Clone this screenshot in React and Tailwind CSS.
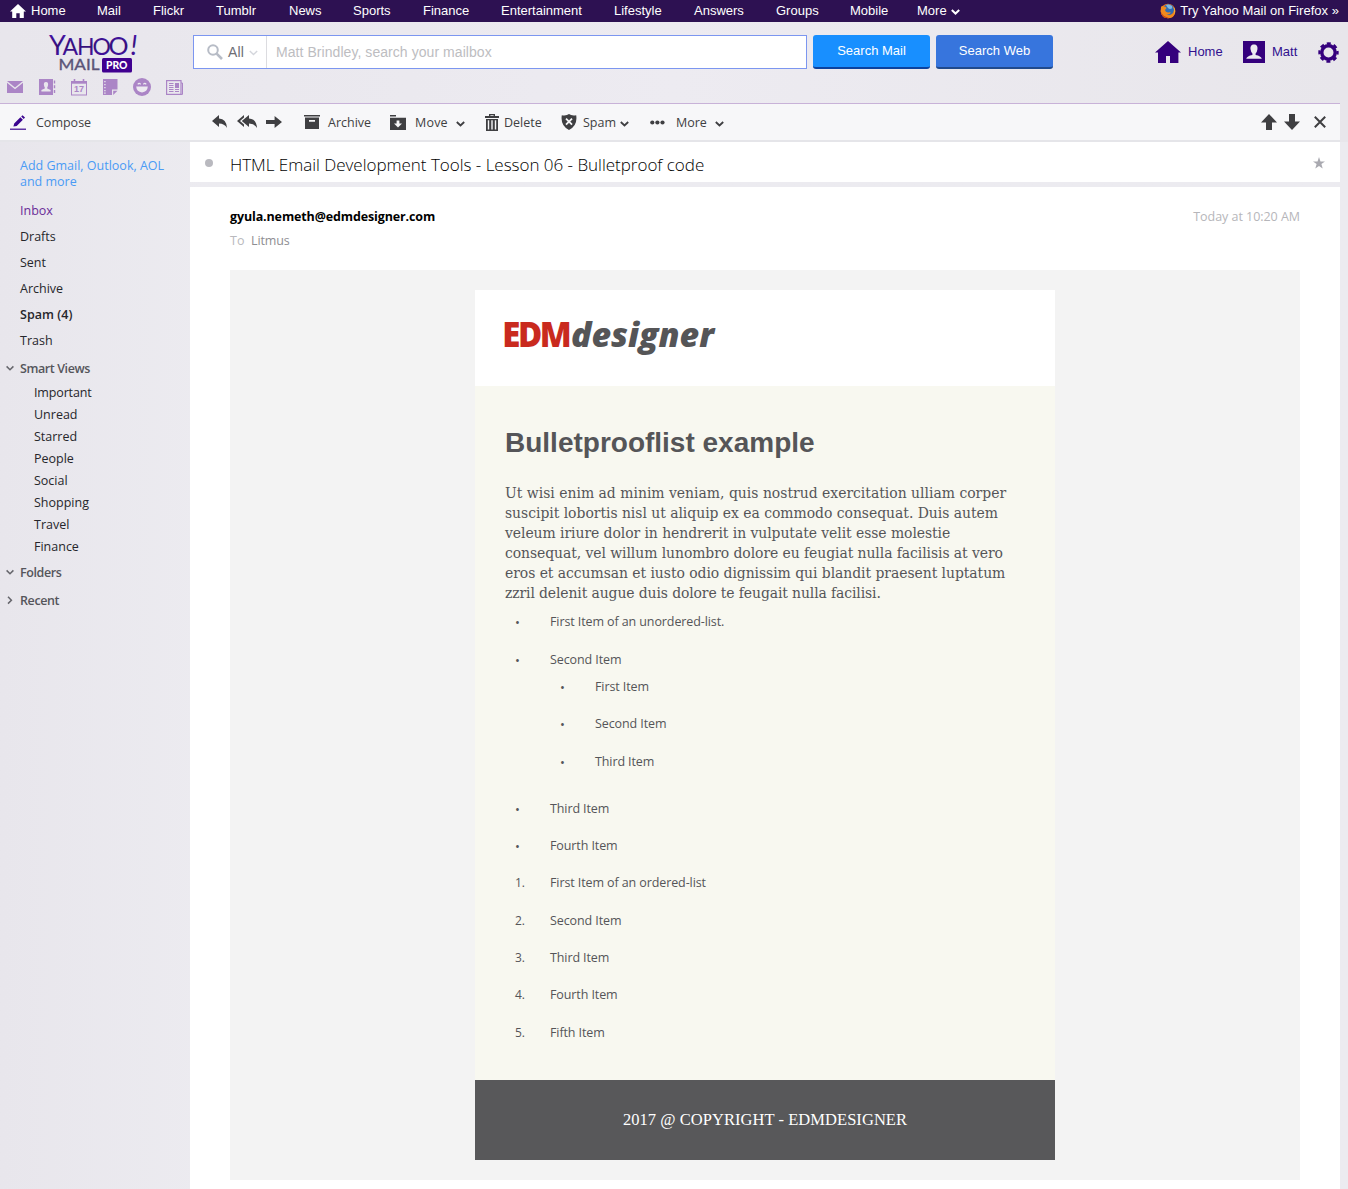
import React from "react";

const NAV = [
  ["Mail", "w-[56px]"],
  ["Flickr", "w-[63px]"],
  ["Tumblr", "w-[73px]"],
  ["News", "w-[64px]"],
  ["Sports", "w-[70px]"],
  ["Finance", "w-[78px]"],
  ["Entertainment", "w-[113px]"],
  ["Lifestyle", "w-[80px]"],
  ["Answers", "w-[82px]"],
  ["Groups", "w-[74px]"],
  ["Mobile", "w-[67px]"],
];

function Chevron({ className = "", stroke = 1.8 }) {
  return (
    <svg className={className} width="9" height="6" viewBox="0 0 9 6" fill="none" stroke="currentColor" strokeWidth={stroke}>
      <path d="M0.8 1 L4.5 4.5 L8.2 1" />
    </svg>
  );
}

function TopNav() {
  return (
    <nav className="flex h-[22px] items-center bg-[#2d1152] pl-[10px] pr-[9px] font-['Liberation_Sans',sans-serif] text-[13px] leading-[20px] text-white">
      <svg width="16" height="14" viewBox="0 0 16 14" fill="#fff" className="mr-[5px]">
        <path d="M8 0 L16 7.4 H13.8 V14 H9.7 V9.2 H6.3 V14 H2.2 V7.4 H0 Z" />
      </svg>
      <span className="w-[66px] whitespace-nowrap">Home</span>
      {NAV.map(([label, w]) => (
        <span key={label} className={`shrink-0 whitespace-nowrap ${w}`}>{label}</span>
      ))}
      <span>More</span>
      <Chevron className="ml-[4px] mt-[2px]" stroke={2} />
      <div className="ml-auto flex items-center">
        <svg width="16" height="16" viewBox="0 0 16 16" className="mr-[4px]">
          <circle cx="8" cy="8" r="7.3" fill="#e8701a" />
          <circle cx="8.6" cy="6.6" r="5.4" fill="#2f6db5" />
          <path d="M6 2 Q9 .5 12 3 Q13 6 10 6 Q8 6 6 2Z" fill="#7db9e4" />
          <path d="M1 4 Q2 2 3.6 3.6 Q5.6 3.6 6.6 5 L5 7 Q5.4 9.6 8.4 9.4 Q10 9 11 9.6 Q9.4 12 6.4 11.4 Q11 13.6 13.6 9.8 Q14.6 7 13.4 3.6 Q16 6.4 15 10.4 Q13 15.3 8 15.3 Q1.4 15 .7 8.4Z" fill="#f08a1e" />
          <path d="M1 9 Q3 14 9 14.6 Q4 16 1.6 11.6Z" fill="#c33f14" />
          <path d="M13.6 4 Q15.6 7 14 11 Q14.6 7 13.6 4Z" fill="#fbd04a" />
        </svg>
        <span className="whitespace-nowrap tracking-[0.03px]">Try Yahoo Mail on Firefox »</span>
      </div>
    </nav>
  );
}

function YahooLogo() {
  return (
    <svg width="93" height="40" viewBox="0 0 93 40" className="block overflow-visible" fontFamily="Lato, sans-serif">
      <defs>
        <linearGradient id="lg" x1="0" y1="0" x2="0" y2="1">
          <stop offset="0" stopColor="#5012c0" />
          <stop offset="0.55" stopColor="#35107a" />
          <stop offset="1" stopColor="#4a10b0" />
        </linearGradient>
      </defs>
      <text y="19.6" fontSize="24" fill="url(#lg)">
        <tspan x="0" fontSize="27">Y</tspan>
        <tspan x="13.4" fontSize="23">A</tspan>
        <tspan x="28" fontSize="23">H</tspan>
        <tspan x="43.5" fontSize="23">O</tspan>
        <tspan x="59.5" fontSize="25">O</tspan>
        <tspan x="81.5" fontSize="27" fontStyle="italic">!</tspan>
      </text>
      <text x="9.5" y="35" fontSize="15" fill="#5b5478" stroke="#5b5478" strokeWidth="0.35" textLength="41" lengthAdjust="spacingAndGlyphs">MAIL</text>
      <rect x="53" y="23" width="30" height="14.5" rx="1.5" fill="#400090" />
      <text x="57" y="34.2" fontSize="10.5" fontWeight="900" fill="#fff" textLength="21.5" lengthAdjust="spacingAndGlyphs">PRO</text>
    </svg>
  );
}

function AppIcons() {
  return (
    <div className="flex items-center text-[#ab85c6]">
      <svg width="16" height="12" viewBox="0 0 16 12" fill="currentColor">
        <path d="M0 0 H16 L8 6.4 Z" />
        <path d="M0 1.8 L8 8.2 L16 1.8 V12 H0 Z" />
      </svg>
      <svg width="17" height="16" viewBox="0 0 17 16" fill="currentColor" className="ml-[16px]">
        <path fillRule="evenodd" d="M0 0 H14 V16 H0 Z M7 3 C5 3 4.6 4.6 5 6.4 Q5.4 8 5.8 8.6 V9.6 L2.4 11 V12.6 H11.6 V11 L8.2 9.6 V8.6 Q8.6 8 9 6.4 C9.4 4.6 9 3 7 3 Z" />
        <path d="M14.8 1.5 h1.4 v3 h-1.4z M14.8 6.2 h1.4 v3 h-1.4z M14.8 11 h1.4 v3 h-1.4z" />
      </svg>
      <svg width="16" height="17" viewBox="0 0 16 17" className="ml-[15px]" fill="none" stroke="currentColor">
        <rect x="0.5" y="2.5" width="15" height="13.5" />
        <path d="M0 3.5 H16" strokeWidth="2.4" />
        <path d="M3.5 0 V3 M12.5 0 V3" strokeWidth="1.6" />
        <text x="8" y="13.4" textAnchor="middle" fontSize="9" fontWeight="700" fill="currentColor" stroke="none" fontFamily="Liberation Sans, sans-serif">17</text>
      </svg>
      <svg width="15" height="16" viewBox="0 0 15 16" className="ml-[16px]" fill="currentColor">
        <path fillRule="evenodd" d="M0 0 H14.5 V10.5 H9 V16 H0 Z M1.2 2 h1.4 v1.2 h-1.4z M1.2 5 h1.4 v1.2 h-1.4z M1.2 8 h1.4 v1.2 h-1.4z M1.2 11 h1.4 v1.2 h-1.4z M1.2 13.6 h1.4 v1.2 h-1.4z" />
        <path d="M10.2 16 V11.8 H14.5 Z" />
      </svg>
      <svg width="18" height="18" viewBox="0 0 18 18" className="ml-[15px]">
        <circle cx="9" cy="9" r="9" fill="currentColor" />
        <path d="M3.2 8.6 H14.8 Q14.4 14.2 9 14.4 Q3.6 14.2 3.2 8.6 Z" fill="#edeaf1" />
        <path d="M4.8 6.4 Q6.2 4.4 7.6 6.4 M10.4 6.4 Q11.8 4.4 13.2 6.4" fill="none" stroke="#edeaf1" strokeWidth="1.2" />
      </svg>
      <svg width="17" height="15" viewBox="0 0 17 15" className="ml-[15px]" fill="none" stroke="currentColor">
        <rect x="0.6" y="0.6" width="14.4" height="13.8" strokeWidth="1.2" />
        <path d="M15 3 H16.5 V14.4 H14" />
        <path d="M3 3.5 H7.5 M3 5.5 H7.5 M3 7.5 H7.5 M3 9.5 H7.5 M3 11.5 H7.5 M9 9.5 H13 M9 11.5 H13" strokeWidth="1" />
        <rect x="9" y="3" width="4" height="5" fill="currentColor" stroke="none" />
      </svg>
    </div>
  );
}

function Header() {
  return (
    <header className="flex h-[81px] font-['Liberation_Sans',sans-serif]">
      <div className="w-[193px] shrink-0 pl-[7px]">
        <div className="h-[56px] pl-[42px] pt-[13px]"><YahooLogo /></div>
        <AppIcons />
      </div>
      <div className="mt-[13px] flex h-[34px] w-[614px] shrink-0 items-center border border-[#7c96f0] bg-white">
        <div className="flex h-full w-[73px] items-center border-r border-[#dcdce0] pl-[13px] text-[14px] text-[#6e6e74]">
          <svg width="16" height="16" viewBox="0 0 16 16" fill="none" stroke="#b7bcc6" className="mr-[5px]">
            <circle cx="6" cy="6" r="4.8" strokeWidth="2" />
            <path d="M9.6 9.6 L15 15" strokeWidth="2.6" />
          </svg>
          <span className="tracking-[0.2px]">All</span>
          <Chevron className="ml-[5px] mt-[2px] text-[#d4d6dc]" stroke={1.4} />
        </div>
        <span className="pl-[9px] text-[14px] tracking-[0.06px] text-[#bdbdc1]">Matt Brindley, search your mailbox</span>
      </div>
      <div className="ml-[6px] mt-[13px] flex h-[34px] w-[117px] items-center justify-center rounded-[3px] border-b-2 border-[#0b429f] bg-[#188fff] text-[13px] text-white">Search Mail</div>
      <div className="ml-[6px] mt-[13px] flex h-[34px] w-[117px] items-center justify-center rounded-[3px] border-b-2 border-[#204a8c] bg-[#3775dd] text-[13px] text-white">Search Web</div>
      <div className="ml-auto mr-[9px] mt-[17px] flex h-[26px] items-center text-[13px] text-[#31108f]">
        <svg width="26" height="22" viewBox="0 0 26 22" fill="#35007d">
          <path d="M13 0 L26 11.4 H23.4 V22 H15 V15 H11 V22 H3 V11.4 H0 Z" />
        </svg>
        <span className="ml-[7px] w-[55px] pb-[1px]">Home</span>
        <svg width="22" height="22" viewBox="0 0 22 22">
          <rect width="22" height="22" fill="#35007d" />
          <path d="M11 3.4 C7.6 3.4 7.2 6 7.6 8.6 Q8 11.4 9.4 12.6 V14 Q4 15 3.2 17.8 H18.8 Q18 15 12.6 14 V12.6 Q14 11.4 14.4 8.6 C14.8 6 14.4 3.4 11 3.4 Z" fill="#ece9f0" />
        </svg>
        <span className="ml-[7px] w-[46px] pb-[1px]">Matt</span>
        <svg width="21" height="21" viewBox="0 0 21 21" fill="none" stroke="#35007d">
          <circle cx="10.5" cy="10.5" r="6.7" strokeWidth="3.4" />
          <circle cx="10.5" cy="10.5" r="9" strokeWidth="2.4" strokeDasharray="4 3.069" strokeDashoffset="2" />
        </svg>
      </div>
    </header>
  );
}

function Toolbar() {
  return (
    <div className="flex h-[39px] w-[1340px] items-center border-b-2 border-t border-b-[#e5e5e9] border-t-[#c8b2d8] bg-[#f7f7f9] pl-[10px] text-[12.5px] text-[#3f3f42] [&>span]:pt-[2px]">
      <svg width="17" height="15" viewBox="0 0 17 15" fill="#3b0590">
        <path d="M3.4 11.6 L4.2 8.4 L10.4 2.2 L12.9 4.7 L6.7 10.9 Z M11.2 1.4 L12.5 .2 L15 2.6 L13.7 3.9 Z" />
        <rect x="0" y="13.6" width="16" height="1.2" />
      </svg>
      <span className="ml-[9px] w-[176px]">Compose</span>
      <svg width="15" height="14" viewBox="0 0 15 14" fill="currentColor">
        <path d="M0 6 L7 0 V3.6 Q14.4 4 15 13 Q12.6 8.8 7 8.6 V12 Z" />
      </svg>
      <svg width="20" height="14" viewBox="0 0 20 14" fill="currentColor" className="ml-[10px]">
        <path d="M0 6 L7 0 V2.4 L3 6 L7 9.6 V12 Z" />
        <path d="M4.8 6 L12 0 V3.6 Q19.4 4 20 13 Q17.6 8.8 12 8.6 V12 Z" />
      </svg>
      <svg width="16" height="12" viewBox="0 0 16 12" fill="currentColor" className="ml-[9px]">
        <path d="M16 6 L8.6 0 V4 H0 V8 H8.6 V12 Z" />
      </svg>
      <svg width="16" height="14" viewBox="0 0 16 14" fill="currentColor" className="ml-[22px]">
        <path fillRule="evenodd" d="M0 0 H16 V1.4 H0 Z M1 2.6 H15 V14 H1 Z M5 5 V6.8 H11 V5 Z" />
      </svg>
      <span className="ml-[8px] w-[62px]">Archive</span>
      <svg width="16" height="15" viewBox="0 0 16 15" fill="currentColor">
        <path fillRule="evenodd" d="M0 0 H6 V1.6 H0 Z M0 2.8 H16 V15 H0 Z M6.6 5.4 V8.6 H4 L8 12.4 L12 8.6 H9.4 V5.4 Z" />
      </svg>
      <span className="ml-[9px] w-[41px] tracking-[0.2px]">Move</span>
      <Chevron className="mt-[3px]" />
      <svg width="14" height="17" viewBox="0 0 14 17" fill="currentColor" className="ml-[20px]">
        <path fillRule="evenodd" d="M4 0 H10 V2 H14 V4 H0 V2 H4 Z M5.4 1.2 V2 H8.6 V1.2 Z M1 5 H13 V17 H1 Z M2.8 6.2 V15.6 H4.2 V6.2 Z M6.3 6.2 V15.6 H7.7 V6.2 Z M9.8 6.2 V15.6 H11.2 V6.2 Z" />
      </svg>
      <span className="ml-[5px] w-[57px]">Delete</span>
      <svg width="16" height="16" viewBox="0 0 16 16" className="shrink-0">
        <path d="M8 0 Q10.5 2 15.2 1.2 Q16.8 11.6 8 16 Q-.8 11.6 .8 1.2 Q5.5 2 8 0 Z" fill="currentColor" />
        <path d="M5 4.6 L11 10.6 M11 4.6 L5 10.6" stroke="#f7f7f9" strokeWidth="1.8" />
      </svg>
      <span className="ml-[6px] w-[37px]">Spam</span>
      <Chevron className="mt-[3px]" />
      <svg width="15" height="5" viewBox="0 0 15 5" fill="currentColor" className="ml-[21px]">
        <circle cx="2.3" cy="2.5" r="2.1" /><circle cx="7.4" cy="2.5" r="2.1" /><circle cx="12.5" cy="2.5" r="2.1" />
      </svg>
      <span className="ml-[11px] w-[39px]">More</span>
      <Chevron className="mt-[3px]" />
      <svg width="16" height="16" viewBox="0 0 16 16" fill="currentColor" className="ml-auto">
        <path d="M8 0 L16 8.6 H11 V16 H5 V8.6 H0 Z" />
      </svg>
      <svg width="16" height="16" viewBox="0 0 16 16" fill="currentColor" className="ml-[7px]">
        <path d="M8 16 L0 7.4 H5 V0 H11 V7.4 H16 Z" />
      </svg>
      <svg width="12" height="12" viewBox="0 0 12 12" stroke="currentColor" strokeWidth="2" className="ml-[14px] mr-[14px]">
        <path d="M.8 .8 L11.2 11.2 M11.2 .8 L.8 11.2" />
      </svg>
    </div>
  );
}

function Section({ label, open, className = "" }) {
  return (
    <div className={`flex h-[20px] items-center pl-[5px] font-semibold tracking-[-0.4px] text-[#55555b] ${className}`}>
      <svg width="10" height="10" viewBox="0 0 10 10" fill="none" stroke="#66666c" strokeWidth="1.5" className="mb-[2px] mr-[5px]">
        {open ? <path d="M1.6 3.4 L5 6.8 L8.4 3.4" /> : <path d="M3 1.8 L6.4 5.2 L3 8.6" />}
      </svg>
      {label}
    </div>
  );
}

function Sidebar() {
  return (
    <aside className="w-[190px] shrink-0 pt-[16px] text-[12.5px] text-[#26262b]">
      <div className="pl-[20px] leading-[16px] text-[#4a9bf5]">
        <div className="whitespace-nowrap">Add Gmail, Outlook, AOL</div>
        <div>and more</div>
      </div>
      <div className="mt-[8px] pl-[20px] leading-[26px]">
        <div className="text-[#6a2c98]">Inbox</div>
        <div>Drafts</div>
        <div>Sent</div>
        <div>Archive</div>
        <div className="font-semibold tracking-[0.05px]">Spam (4)</div>
        <div>Trash</div>
      </div>
      <Section label="Smart Views" open className="mt-[5px]" />
      <div className="mt-[3px] pl-[34px] leading-[22px]">
        <div className="tracking-[-0.15px]">Important</div>
        <div>Unread</div>
        <div>Starred</div>
        <div>People</div>
        <div>Social</div>
        <div>Shopping</div>
        <div>Travel</div>
        <div>Finance</div>
      </div>
      <Section label="Folders" open className="mt-[5px]" />
      <Section label="Recent" className="mt-[8px]" />
    </aside>
  );
}

const PARAGRAPH = [
  ["Ut wisi enim ad minim veniam, quis nostrud exercitation ulliam corper", ""],
  ["suscipit lobortis nisl ut aliquip ex ea commodo consequat. Duis autem", "tracking-[-0.03px]"],
  ["veleum iriure dolor in hendrerit in vulputate velit esse molestie", "tracking-[-0.06px]"],
  ["consequat, vel willum lunombro dolore eu feugiat nulla facilisis at vero", "tracking-[-0.07px]"],
  ["eros et accumsan et iusto odio dignissim qui blandit praesent luptatum", "tracking-[-0.05px]"],
  ["zzril delenit augue duis dolore te feugait nulla facilisi.", "tracking-[-0.11px]"],
];

const ITEMS = [
  ["•", "First Item of an unordered-list.", "mt-[9px]"],
  ["•", "Second Item", "mt-[18px]"],
  ["•", "First Item", "mt-[7px] pl-[45px]"],
  ["•", "Second Item", "mt-[17px] pl-[45px]"],
  ["•", "Third Item", "mt-[18px] pl-[45px]"],
  ["•", "Third Item", "mt-[27px]"],
  ["•", "Fourth Item", "mt-[17px]"],
  ["1.", "First Item of an ordered-list", "mt-[17px]"],
  ["2.", "Second Item", "mt-[18px]"],
  ["3.", "Third Item", "mt-[17px]"],
  ["4.", "Fourth Item", "mt-[17px]"],
  ["5.", "Fifth Item", "mt-[18px]"],
];

function Email() {
  return (
    <div className="mx-auto w-[580px]">
      <div className="flex h-[96px] items-start bg-white pl-[28px] pt-[24px]">
        <svg width="214" height="46" viewBox="-2 0 214 46" className="overflow-visible" fontFamily="Open Sans, sans-serif" fontWeight="800">
          <text x="-2.8" y="33" fontSize="35" fill="#c92a1e" letterSpacing="-2.6" textLength="67" lengthAdjust="spacingAndGlyphs">EDM</text>
          <text x="66" y="33" fontSize="34" fontStyle="italic" fill="#555557" textLength="143" lengthAdjust="spacingAndGlyphs">designer</text>
        </svg>
      </div>
      <div className="h-[694px] bg-[#f8f8f0] px-[30px] pt-[37px] text-[#555558]">
        <h1 className="h-[60px] font-['Liberation_Sans',sans-serif] text-[28px] font-bold leading-[40px]">Bulletprooflist example</h1>
        <div className="whitespace-nowrap font-['DejaVu_Serif',serif] text-[15.5px] leading-[20px] [font-stretch:condensed]">
          {PARAGRAPH.map(([line, cls]) => <div key={line} className={cls}>{line}</div>)}
        </div>
        <div className="text-[12.5px] leading-[20px]">
          {ITEMS.map(([mark, text, cls], i) => (
            <div key={i} className={`flex h-[20px] items-center ${cls}`}>
              <span className={mark === "•" ? "w-[45px] pl-[10px] text-[13px]" : "w-[45px] pl-[10px] text-[12px]"}>{mark}</span>
              <span className="tracking-[-0.1px]">{text}</span>
            </div>
          ))}
        </div>
      </div>
      <div className="flex h-[80px] items-center justify-center bg-[#58585a] font-['Liberation_Serif',serif] text-[16.5px] tracking-[0.05px] text-white">2017 @ COPYRIGHT - EDMDESIGNER</div>
    </div>
  );
}

export default function App() {
  return (
    <div className="h-[1189px] w-[1348px] overflow-hidden bg-[#e9e7ed] font-['Open_Sans',sans-serif]">
      <TopNav />
      <div className="bg-linear-to-r from-[#e8e6ec] via-[#edebf1] via-50% to-[#e8e6eb]">
        <Header />
        <Toolbar />
      </div>
      <div className="flex h-[1047px] bg-linear-to-r from-[#e8e6ec] to-[#ecebf0] to-15%">
        <Sidebar />
        <main className="w-[1150px] shrink-0">
          <div className="flex h-[40px] items-center bg-white pl-[15px]">
            <span className="mt-[2px] size-[8px] rounded-full bg-[#b9b9bf]" />
            <h2 className="ml-[17px] whitespace-nowrap pt-[5px] text-[17px] font-light leading-[24px] tracking-[-0.02px] text-black">HTML Email Development Tools - Lesson 06 - Bulletproof code</h2>
            <svg width="12" height="12" viewBox="0 0 12 12" fill="#a9a9b0" className="ml-auto mr-[15px] mt-[2px]">
              <path d="M6 0 L7.5 4.4 H12 L8.4 7.1 L9.7 11.6 L6 8.9 L2.3 11.6 L3.6 7.1 L0 4.4 H4.5 Z" />
            </svg>
          </div>
          <div className="mt-[5px] bg-white px-[40px] pb-[9px] pt-[18px] text-[12.5px]">
            <div className="flex h-[24px] items-center justify-between">
              <span className="font-bold tracking-[-0.13px] text-black">gyula.nemeth@edmdesigner.com</span>
              <span className="tracking-[-0.04px] text-[#b6b6ba]">Today at 10:20 AM</span>
            </div>
            <div className="flex h-[24px] items-center">
              <span className="w-[21px] text-[#b9b9bd]">To</span>
              <span className="tracking-[-0.1px] text-[#8e8e92]">Litmus</span>
            </div>
            <div className="mt-[17px] bg-[#f3f3f3] py-[20px]"><Email /></div>
          </div>
        </main>
      </div>
    </div>
  );
}
